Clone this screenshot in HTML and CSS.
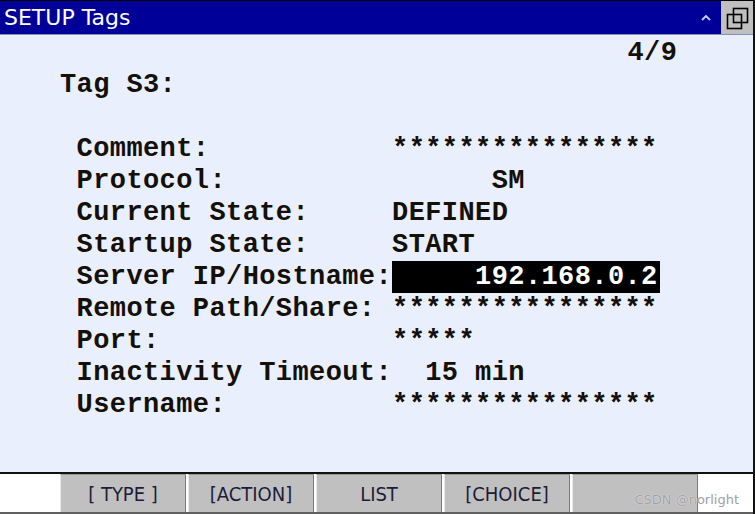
FILE: index.html
```html
<!DOCTYPE html>
<html>
<head>
<meta charset="utf-8">
<link rel="stylesheet" href="styles.css">
</head>
<body>
<div class="window">
  <div class="titlebar">
    <span class="title">SETUP Tags</span>
    <span class="caret"><svg width="10" height="7" viewBox="0 0 10 7"><path d="M1 6 L5 2 L9 6" fill="none" stroke="#c8d0ff" stroke-width="1.8"/></svg></span>
    <span class="restore"><svg width="26" height="26" viewBox="0 0 26 26"><rect x="9.5" y="3.5" width="14" height="14" fill="none" stroke="#000" stroke-width="1.6"/><rect x="3.5" y="9.5" width="14" height="14" fill="none" stroke="#000" stroke-width="1.6"/></svg></span>
  </div>
  <div class="screen">
<div class="line page">                                  4/9</div>
<div class="line">Tag S3:</div>
<div class="line"> </div>
<div class="line"> Comment:           ****************</div>
<div class="line"> Protocol:                SM</div>
<div class="line"> Current State:     DEFINED</div>
<div class="line"> Startup State:     START</div>
<div class="line"> Server IP/Hostname:<span class="inv">     192.168.0.2</span></div>
<div class="line"> Remote Path/Share: ****************</div>
<div class="line"> Port:              *****</div>
<div class="line"> Inactivity Timeout:  15 min</div>
<div class="line"> Username:          ****************</div>
  </div>
  <div class="footer">
    <div class="fkey">[ TYPE ]</div>
    <div class="fkey">[ACTION]</div>
    <div class="fkey">LIST</div>
    <div class="fkey">[CHOICE]</div>
    <div class="fkey"></div>
    <span class="watermark">CSDN @norlight</span>
  </div>
</div>
</body>
</html>
```
FILE: styles.css
```css
html, body {
  margin: 0;
  padding: 0;
  background: #ffffff;
}
body {
  width: 755px;
  height: 514px;
  overflow: hidden;
}
.window {
  width: 753px;
  height: 514px;
  border-right: 2px solid #111;
  display: flex;
  flex-direction: column;
  position: relative;
}
.titlebar {
  height: 33px;
  border-top: 1px solid #000;
  background: #000099;
  display: flex;
  align-items: center;
  flex: none;
}
.title {
  font-family: "DejaVu Sans", Verdana, sans-serif;
  font-size: 22px;
  color: #ffffff;
  padding-left: 4px;
  flex: 1;
  line-height: 33px;
}
.caret {
  display: flex;
  align-items: center;
  width: 20px;
  height: 33px;
  padding-left: 2px;
}
.restore {
  width: 32px;
  height: 33px;
  background: #c0c0c0;
  display: flex;
  align-items: center;
  justify-content: center;
}
.screen {
  flex: 1;
  background: #e9effd;
  padding-left: 60px;
  padding-top: 2px;
  font-family: "Courier New", "Nimbus Mono PS", "Nimbus Mono L", FreeMono, "Liberation Mono", monospace;
  font-weight: bold;
  font-size: 27px;
  letter-spacing: 0.4px;
  color: #141008;
  border-top: 1px solid #8890c0;
}
.line {
  white-space: pre;
  height: 32px;
  line-height: 32px;
}
.page {
  padding-left: 3px;
}
.inv {
  background: #000;
  color: #fff;
  display: inline-block;
  height: 32px;
  padding-right: 2px;
}
.footer {
  flex: none;
  height: 38px;
  border-top: 2px solid #111;
  border-bottom: 2px solid #606060;
  background: #ffffff;
  display: flex;
  padding-left: 60px;
  gap: 2px;
}
.fkey {
  width: 124px;
  background: #c0c0c0;
  border-top: 1px solid #9a9a9a;
  border-left: 1px solid #e8e8e8;
  border-right: 1px solid #7a7a7a;
  font-family: "DejaVu Sans Condensed", "DejaVu Sans", sans-serif;
  font-stretch: condensed;
  font-size: 20px;
  color: #1c1c3a;
  display: flex;
  align-items: center;
  justify-content: center;
}
.watermark {
  position: absolute;
  right: 14px;
  bottom: 7px;
  font-family: "DejaVu Sans", sans-serif;
  font-size: 13px;
  color: #a0a0a0;
  text-shadow: 0 0 1px #ffffff;
}
```
